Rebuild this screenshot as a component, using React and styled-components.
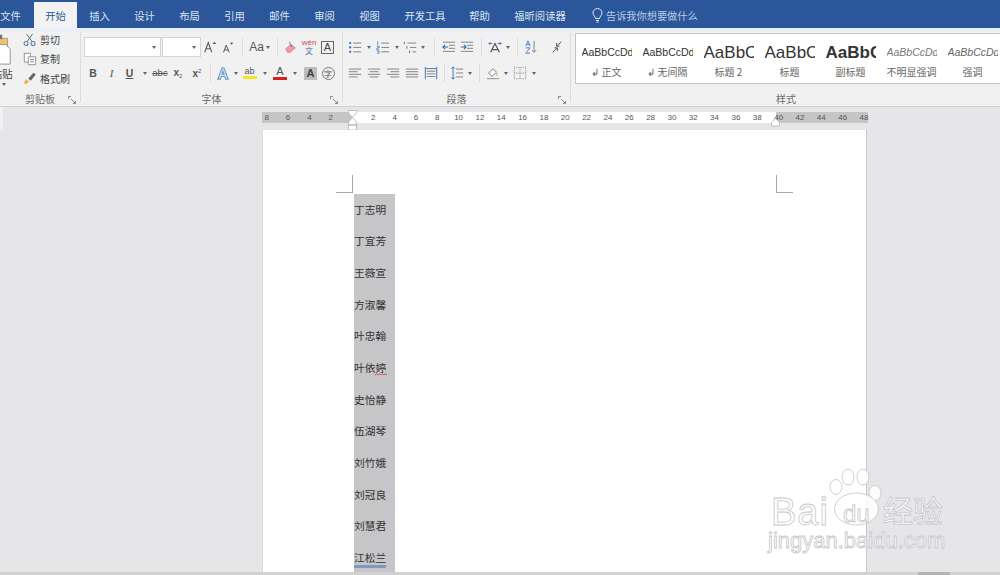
import React from "react";
import styled, { createGlobalStyle } from "styled-components";

const CJK = `"Noto Sans CJK SC", "Noto Sans", sans-serif`;

const Global = createGlobalStyle`
  html, body { margin: 0; padding: 0; background: #e6e6e8; overflow: hidden; }
  body { font-family: ${CJK}; }
`;

const Window = styled.div`
  position: relative;
  width: 1000px;
  height: 575px;
  overflow: hidden;
  display: flex;
  flex-direction: column;
  background: #e6e6e8;
`;

/* ---------- tabs ---------- */
const TabBar = styled.div`
  flex: none;
  height: 28px;
  background: #2b579a;
  display: flex;
  align-items: stretch;
  margin-left: -13px;
  padding-top: 2px;
  box-sizing: border-box;
`;
const Tab = styled.div`
  flex: none;
  width: ${(p) => p.$w || 45}px;
  display: flex;
  align-items: center;
  justify-content: center;
  font-size: 10.3px;
  color: ${(p) => (p.$active ? "#2b579a" : "#dbe4f1")};
  background: ${(p) => (p.$active ? "#f2f2f3" : "transparent")};
`;
const TellMe = styled.div`
  display: flex;
  align-items: center;
  gap: 2px;
  margin-left: 12px;
  font-size: 10.2px;
  color: #b9cbe4;
`;

/* ---------- ribbon ---------- */
const Ribbon = styled.div`
  flex: none;
  height: 79px;
  box-sizing: border-box;
  background: #f1f1f2;
  border-top: 4px solid #e9eff6;
  border-bottom: 1px solid #d2d2d2;
  display: flex;
  overflow: hidden;
`;
const Group = styled.div`
  position: relative;
  flex: none;
  width: ${(p) => p.$w}px;
  box-sizing: border-box;
  height: 70px;
  border-right: ${(p) => (p.$last ? "0" : "1px solid #dcdcdc")};
  display: flex;
  flex-direction: column;
`;
const GroupBody = styled.div`
  flex: none;
  height: 56px;
  box-sizing: border-box;
  padding-top: ${(p) => p.$top ?? 4}px;
  padding-left: ${(p) => p.$left ?? 0}px;
  display: flex;
  flex-direction: ${(p) => (p.$row ? "row" : "column")};
  gap: ${(p) => p.$gap ?? 4}px;
`;
const GroupLabel = styled.div`
  flex: none;
  margin-top: 4px;
  height: 14px;
  line-height: 14px;
  text-align: center;
  font-size: 10px;
  color: #6a6a6a;
`;
const Launcher = styled.svg`
  position: absolute;
  right: 4px;
  bottom: -2px;
  width: 8px;
  height: 8px;
`;
const ToolRow = styled.div`
  display: flex;
  align-items: center;
  height: 22px;
`;
const Cell = styled.div`
  flex: none;
  width: ${(p) => p.$w}px;
  height: 20px;
  display: flex;
  align-items: center;
  justify-content: center;
`;
const Sep = styled.div`
  width: 1px;
  height: 18px;
  background: #dcdcdc;
`;
const Caret = styled.div`
  width: 0;
  height: 0;
  border-left: 2.5px solid transparent;
  border-right: 2.5px solid transparent;
  border-top: 3px solid #666;
`;
const Combo = styled.div`
  flex: none;
  width: ${(p) => p.$w}px;
  height: 20px;
  margin-right: ${(p) => p.$gap || 0}px;
  box-sizing: border-box;
  background: #fff;
  border: 1px solid #d4d4d4;
  display: flex;
  align-items: center;
  justify-content: flex-end;
  padding-right: 4px;
`;
const Glyph = styled.span`
  font-family: ${(p) => (p.$serif ? `"Liberation Serif", serif` : `"Liberation Sans", sans-serif`)};
  font-size: ${(p) => p.$size || 11}px;
  font-weight: ${(p) => (p.$bold ? 700 : 400)};
  font-style: ${(p) => (p.$italic ? "italic" : "normal")};
  text-decoration: ${(p) => p.$deco || "none"};
  color: ${(p) => p.$color || "#555"};
  line-height: 1;
  white-space: nowrap;
`;
const SupSub = styled.span`
  font-size: 6px;
  font-weight: 400;
  vertical-align: ${(p) => (p.$sup ? "4px" : "-2px")};
`;
const ColorGlyph = styled.div`
  display: flex;
  flex-direction: column;
  align-items: center;
  line-height: 1;
`;
const ColorBar = styled.div`
  width: 14px;
  height: 3px;
  background: ${(p) => p.$c};
`;
const BoxedA = styled.div`
  width: 13px;
  height: 13px;
  box-sizing: border-box;
  border: 1px solid #666;
  display: flex;
  align-items: center;
  justify-content: center;
  font-family: "Liberation Sans", sans-serif;
  font-size: 11px;
  color: #444;
`;
const ShadedA = styled(BoxedA)`
  border: 0;
  background: #bdbdbd;
  font-weight: 700;
`;
const CircleChar = styled.div`
  width: 13px;
  height: 13px;
  box-sizing: border-box;
  border: 1px solid #777;
  border-radius: 50%;
  display: flex;
  align-items: center;
  justify-content: center;
  font-size: 8px;
  color: #555;
`;
const Wen = styled.div`
  display: flex;
  flex-direction: column;
  align-items: center;
  font-size: 8px;
  line-height: 8px;
  color: #666;
`;
const WenTop = styled.span`
  color: #c0504d;
  font-family: "Liberation Sans", sans-serif;
`;
const WenBottom = styled.span`
  color: #3f6fa8;
`;

/* clipboard */
const PasteCol = styled.div`
  flex: none;
  width: 20px;
  margin-left: -6px;
  display: flex;
  flex-direction: column;
  align-items: center;
`;
const PasteText = styled.div`
  font-size: 10.6px;
  line-height: 12px;
  color: #444;
  margin: 3px 0 3px -4px;
`;
const ClipCol = styled.div`
  margin-left: 9px;
  margin-top: -3px;
  display: flex;
  flex-direction: column;
`;
const ClipItem = styled.div`
  height: 19.5px;
  display: flex;
  align-items: center;
  gap: 3px;
  font-size: 10px;
  color: #444;
`;

/* styles gallery */
const Gallery = styled.div`
  flex: none;
  margin-left: 4px;
  width: 430px;
  height: 51px;
  box-sizing: border-box;
  background: #fff;
  border: 1px solid #c6c6c6;
  border-right: 0;
  display: flex;
`;
const StyleItem = styled.div`
  flex: none;
  width: 61px;
  display: flex;
  flex-direction: column;
  align-items: center;
  overflow: hidden;
`;
const StylePreview = styled.div`
  width: 50px;
  height: 32px;
  padding-top: 4px;
  display: flex;
  align-items: center;
  box-sizing: border-box;
  overflow: hidden;
  white-space: nowrap;
  font-family: "Liberation Sans", sans-serif;
  font-size: ${(p) => p.$size}px;
  line-height: 1;
  font-weight: ${(p) => (p.$bold ? 700 : 400)};
  font-style: ${(p) => (p.$italic ? "italic" : "normal")};
  color: ${(p) => p.$color || "#333"};
`;
const StyleName = styled.div`
  font-size: 10px;
  line-height: 12px;
  color: #666;
  white-space: nowrap;
`;

/* ---------- ruler ---------- */
const Workspace = styled.div`
  position: relative;
  flex: 1;
  min-height: 0;
  display: flex;
  flex-direction: column;
  align-items: flex-start;
  padding-left: 263px;
`;
const LeftEdge = styled.div`
  position: absolute;
  left: 0;
  top: 0;
  width: 3px;
  height: 22px;
  background: #f1f1f2;
`;
const Ruler = styled.div`
  flex: none;
  margin: 5px 0 0 -1px;
  height: 11px;
  display: flex;
  position: relative;
`;
const RulerPart = styled.div`
  flex: none;
  width: ${(p) => p.$w}px;
  height: 11px;
  background: ${(p) => (p.$light ? "#fff" : "#c5c5c5")};
  display: flex;
  justify-content: ${(p) => (p.$end ? "flex-end" : "flex-start")};
  padding-left: ${(p) => p.$pl || 0}px;
  padding-right: ${(p) => p.$pr || 0}px;
  box-sizing: border-box;
`;
const Tick = styled.div`
  flex: none;
  width: 21.33px;
  margin-left: ${(p) => p.$ml || 0}px;
  text-align: center;
  font-family: "Liberation Sans", sans-serif;
  font-size: 8px;
  line-height: 11px;
  color: #555;
`;
const IndentMark = styled.svg`
  position: absolute;
  left: ${(p) => p.$x}px;
  top: ${(p) => p.$y}px;
  width: 9px;
  height: 21px;
`;

/* ---------- page ---------- */
const Page = styled.div`
  position: relative;
  flex: none;
  margin-top: 7px;
  width: 603px;
  height: 442px;
  background: #fff;
  box-sizing: border-box;
  padding: 64px 0 0 91px;
  box-shadow: 1px 0 0 #c9c9cc, -1px 0 0 #dcdcde;
`;
const CropMark = styled.div`
  position: absolute;
  top: 45px;
  width: 17px;
  height: 18px;
  box-sizing: border-box;
  border-bottom: 1px solid #a8a8a8;
  ${(p) => (p.$right ? "left: 513px; border-left: 1px solid #a8a8a8;" : "left: 73px; border-right: 1px solid #a8a8a8;")}
`;
const NameColumn = styled.div`
  width: 41px;
  background: #c6c5c7;
  display: flex;
  flex-direction: column;
`;
const NameRow = styled.div`
  flex: none;
  height: 31.67px;
  display: flex;
  align-items: center;
`;
const Name = styled.span`
  position: relative;
  font-size: 10.7px;
  line-height: 14px;
  color: #333;
  white-space: nowrap;
`;
const BlueRule = styled.span`
  position: absolute;
  left: 0;
  right: 0;
  bottom: -3px;
  height: 3px;
  background: #7f97c4;
`;
const Squiggle = styled.svg`
  position: absolute;
  left: 21px;
  bottom: -1px;
  width: 12px;
  height: 3px;
`;

/* ---------- status + watermark ---------- */
const StatusBar = styled.div`
  position: absolute;
  left: 0;
  right: 0;
  bottom: 0;
  height: 3px;
  background: #d2d2d2;
`;
const StatusThumb = styled.div`
  position: absolute;
  left: 918px;
  top: 0;
  width: 32px;
  height: 3px;
  background: #b4b4b4;
`;
const Watermark = styled.div`
  position: absolute;
  left: 766px;
  top: 466px;
  width: 190px;
  height: 92px;
  pointer-events: none;
`;
const Outlined = styled.div`
  position: absolute;
  left: ${(p) => p.$x}px;
  top: ${(p) => p.$y}px;
  font-family: ${(p) => (p.$cjk ? CJK : `"Liberation Sans", sans-serif`)};
  font-size: ${(p) => p.$size}px;
  line-height: 1;
  letter-spacing: ${(p) => p.$ls || 0}px;
  white-space: nowrap;
  color: rgba(255, 255, 255, 0.92);
  -webkit-text-stroke: 0.8px #c6c6ca;
`;
const Paw = styled.svg`
  position: absolute;
  left: 62px;
  top: 0;
  width: 62px;
  height: 62px;
`;

/* ---------- icons ---------- */
const S = { fill: "none", stroke: "#777", strokeWidth: 1 };
const lines = (rows) => rows.map(([a, b, y]) => `M${a} ${y}H${b}`).join("");
const ICONS = {
  bullets: (
    <>
      <path {...S} d={lines([[6, 15, 3.5], [6, 15, 8.5], [6, 15, 13.5]])} />
      <circle cx="2.5" cy="3.5" r="1.3" fill="#2b6cb0" />
      <circle cx="2.5" cy="8.5" r="1.3" fill="#2b6cb0" />
      <circle cx="2.5" cy="13.5" r="1.3" fill="#2b6cb0" />
    </>
  ),
  numbers: (
    <>
      <path {...S} d={lines([[6, 15, 3.5], [6, 15, 8.5], [6, 15, 13.5]])} />
      <path stroke="#2b6cb0" fill="none" d="M2 1.5V5.5M1 7H3.5V9H1V11H3.5M1 12.5H3.5V15H1" strokeWidth=".8" />
    </>
  ),
  multi: (
    <>
      <path {...S} d={lines([[5, 15, 3.5], [8, 15, 8.5], [11, 15, 13.5]])} />
      <path stroke="#2b6cb0" fill="none" d="M1.5 2V5M4.5 7V10M7.5 12V15" strokeWidth="1" />
    </>
  ),
  outdent: (
    <>
      <path {...S} d={lines([[1, 15, 2.5], [8, 15, 6], [8, 15, 9.5], [1, 15, 13]])} />
      <path fill="none" stroke="#2b6cb0" strokeWidth="1.2" d="M7 8H1M3.5 5.5L1 8l2.5 2.5" />
    </>
  ),
  indent: (
    <>
      <path {...S} d={lines([[1, 15, 2.5], [8, 15, 6], [8, 15, 9.5], [1, 15, 13]])} />
      <path fill="none" stroke="#2b6cb0" strokeWidth="1.2" d="M1 8H7M4.5 5.5L7 8l-2.5 2.5" />
    </>
  ),
  chinese: (
    <>
      <path fill="none" stroke="#555" strokeWidth="1.4" d="M3 14L8 4l5 10M5 11H11" />
      <path fill="none" stroke="#2b6cb0" strokeWidth="1" d="M1 4h4M2.5 2.5L1 4l1.5 1.5M11 4h4M13.5 2.5L15 4l-1.5 1.5" />
    </>
  ),
  sort: (
    <>
      <path fill="none" stroke="#2b6cb0" strokeWidth=".9" d="M2 7L4.5 1 7 7M3 5H6M2 9H7L2 15H7" />
      <path {...S} d="M11.5 1V14M9 11.5l2.5 2.5 2.5-2.5" />
    </>
  ),
  marks: (
    <path fill="none" stroke="#555" strokeWidth="1.1" d="M13 2L7.500 7M7.500 3.500V7H11M3 14L8.500 9M8.500 12.500V9H5" />
  ),
  left: <path {...S} d={lines([[1, 15, 3.5], [1, 11, 6.5], [1, 15, 9.5], [1, 11, 12.5]])} />,
  center: <path {...S} d={lines([[1, 15, 3.5], [3, 13, 6.5], [1, 15, 9.5], [3, 13, 12.5]])} />,
  right: <path {...S} d={lines([[1, 15, 3.5], [5, 15, 6.5], [1, 15, 9.5], [5, 15, 12.5]])} />,
  justify: <path {...S} d={lines([[1, 15, 3.5], [1, 15, 6.5], [1, 15, 9.5], [1, 15, 12.5]])} />,
  distribute: (
    <>
      <path {...S} d={lines([[3, 13, 6], [3, 13, 9], [3, 13, 12]])} />
      <path fill="none" stroke="#2b6cb0" d="M1.5 1V15M14.5 1V15M2 3H14" />
    </>
  ),
  spacing: (
    <>
      <path {...S} d={lines([[7, 15, 3.5], [7, 15, 8], [7, 15, 12.5]])} />
      <path fill="none" stroke="#2b6cb0" d="M3.5 1V15M1.5 3L3.5 1l2 2M1.5 13l2 2 2-2" />
    </>
  ),
  fill: (
    <>
      <path fill="#f5f5f5" stroke="#777" d="M3 8L8 3l4 4-5 5z" />
      <path fill="#e9b872" stroke="none" d="M12 7l1.6 3a1.2 1.2 0 1 1-2.4 0z" />
      <path fill="none" stroke="#888" d="M1 14.5H15" />
    </>
  ),
  borders: (
    <path fill="none" stroke="#888" strokeDasharray="1 1" d="M1.5 1.5H14.5V14.5H1.5ZM8 1.5V14.5M1.5 8H14.5" />
  ),
  growA: (
    <>
      <path fill="none" stroke="#555" strokeWidth="1.2" d="M2 14L6 3l4 11M3.5 10H8.5" />
      <path fill="#555" d="M11 4.5L13 2l2 2.5z" />
    </>
  ),
  shrinkA: (
    <>
      <path fill="none" stroke="#555" strokeWidth="1.2" d="M3 14L6.5 5 10 14M4.500 11H8.500" />
      <path fill="#555" d="M11 2L13 4.500 15 2z" />
    </>
  ),
  eraser: (
    <>
      <path fill="#ef9aa6" stroke="#d77b88" d="M2 10L8 5l5 4-6 5H4z" />
      <path fill="none" stroke="#5b7aa5" d="M6 2L9 8" />
    </>
  ),
  effects: (
    <path fill="#cfe0f3" stroke="#6b97cc" strokeWidth="1.2" d="M2 15L7 2h2l5 13h-3l-1-3H6l-1 3zM6.800 9.500h2.400L8 6z" />
  ),
  scissors: (
    <>
      <circle cx="3.5" cy="12" r="2.3" fill="none" stroke="#5f7ea6" strokeWidth="1.2" />
      <circle cx="11.5" cy="12" r="2.3" fill="none" stroke="#5f7ea6" strokeWidth="1.2" />
      <path fill="none" stroke="#666" strokeWidth="1.1" d="M4.500 10L11 1M10.500 10L4 1" />
    </>
  ),
  copy: (
    <>
      <path fill="#fff" stroke="#888" d="M1.500 1.500H8.500V11.500H1.500Z" />
      <path fill="#fff" stroke="#888" d="M6 5.500H14.500V14.500H6Z" />
      <path stroke="#5f7ea6" d="M8 8.500H12.500M8 11H12.500" />
    </>
  ),
  brush: (
    <>
      <path fill="#e8b45f" d="M1 14l2-5 4 3-3 3z" />
      <path fill="#666" d="M6 8.500l6-6.500 2.500 2-5.500 7z" />
    </>
  ),
  paste: (
    <>
      <path fill="#eac27c" stroke="#b99656" d="M-8 6H14V34H-8Z" />
      <path fill="#fff" stroke="#8f8f8f" d="M2 13H12L17 18V35H2Z" />
      <path fill="#777" d="M-3 2H8V7H-3Z" />
    </>
  ),
};
const Icon = ({ name, size = 14 }) => (
  <svg width={size} height={size} viewBox="0 0 16 16" aria-hidden="true">
    {ICONS[name]}
  </svg>
);

const Tool = ({ w, children }) => <Cell $w={w}>{children}</Cell>;
const Drop = ({ w = 10 }) => (
  <Cell $w={w}>
    <Caret />
  </Cell>
);
const Divider = ({ w }) => (
  <Cell $w={w}>
    <Sep />
  </Cell>
);
const IconTool = ({ w, name, size }) => (
  <Tool w={w}>
    <Icon name={name} size={size} />
  </Tool>
);
const DialogMark = () => (
  <Launcher viewBox="0 0 8 8" aria-hidden="true">
    <path d="M.5 3V.5H3M7.500 5V7.500H5M3 3l4 4" fill="none" stroke="#888" />
  </Launcher>
);

const TABS = [
  ["文件", 47],
  ["开始", 43],
  ["插入", 45],
  ["设计", 45],
  ["布局", 45],
  ["引用", 45],
  ["邮件", 45],
  ["审阅", 45],
  ["视图", 45],
  ["开发工具", 66],
  ["帮助", 43],
  ["福昕阅读器", 78],
];
const STYLES = [
  ["AaBbCcDd", "↲ 正文", 10.5],
  ["AaBbCcDd", "↲ 无间隔", 10.5],
  ["AaBbC", "标题 2", 17],
  ["AaBbC", "标题", 17],
  ["AaBbC", "副标题", 17, { bold: true }],
  ["AaBbCcDd", "不明显强调", 10.5, { italic: true, color: "#777" }],
  ["AaBbCcDd", "强调", 10.5, { italic: true, color: "#666" }],
];
const NAMES = ["丁志明", "丁宜芳", "王薇宣", "方淑馨", "叶忠翰", "叶依婷", "史怡静", "伍湖琴", "刘竹娥", "刘冠良", "刘慧君", "江松兰"];
const LEFT_TICKS = [8, 6, 4, 2];
const MID_TICKS = Array.from({ length: 19 }, (_, i) => (i + 1) * 2);
const RIGHT_TICKS = [40, 42, 44, 46, 48];

export default function App() {
  return (
    <Window>
      <Global />
      <TabBar>
        {TABS.map(([t, w]) => (
          <Tab key={t} $w={w} $active={t === "开始"}>
            {t}
          </Tab>
        ))}
        <TellMe>
          <svg width="13" height="15" viewBox="0 0 13 15" aria-hidden="true">
            <path fill="none" stroke="#dfe8f4" d="M4.500 10.500C4.500 8.500 2 7.500 2 5a4.500 4.500 0 0 1 9 0c0 2.500-2.500 3.500-2.500 5.500zM5 12.500H8M5.500 14H7.500" />
          </svg>
          告诉我你想要做什么
        </TellMe>
      </TabBar>

      <Ribbon>
        <Group $w={81}>
          <GroupBody $row $top={1} $gap={0}>
            <PasteCol>
              <svg width="20" height="32" viewBox="0 0 20 36" aria-hidden="true">
                {ICONS.paste}
              </svg>
              <PasteText>粘贴</PasteText>
              <Caret />
            </PasteCol>
            <ClipCol>
              <ClipItem>
                <Icon name="scissors" />剪切
              </ClipItem>
              <ClipItem>
                <Icon name="copy" />复制
              </ClipItem>
              <ClipItem>
                <Icon name="brush" />格式刷
              </ClipItem>
            </ClipCol>
          </GroupBody>
          <GroupLabel>剪贴板</GroupLabel>
          <DialogMark />
        </Group>

        <Group $w={262}>
          <GroupBody $left={3}>
            <ToolRow>
              <Combo $w={77} $gap={1}>
                <Caret />
              </Combo>
              <Combo $w={39}>
                <Caret />
              </Combo>
              <IconTool w={18} name="growA" />
              <IconTool w={16} name="shrinkA" size={13} />
              <Divider w={14} />
              <Tool w={15}>
                <Glyph $size={12}>Aa</Glyph>
              </Tool>
              <Drop w={7} />
              <Divider w={12} />
              <IconTool w={16} name="eraser" />
              <Tool w={20}>
                <Wen>
                  <WenTop>wén</WenTop>
                  <WenBottom>文</WenBottom>
                </Wen>
              </Tool>
              <Tool w={17}>
                <BoxedA>A</BoxedA>
              </Tool>
            </ToolRow>
            <ToolRow>
              <Tool w={18}>
                <Glyph $bold $size={10.5}>B</Glyph>
              </Tool>
              <Tool w={19}>
                <Glyph $italic $serif $size={11}>I</Glyph>
              </Tool>
              <Tool w={17}>
                <Glyph $bold $size={10.5} $deco="underline">U</Glyph>
              </Tool>
              <Drop w={14} />
              <Tool w={16}>
                <Glyph $size={9.5} $deco="line-through">abc</Glyph>
              </Tool>
              <Tool w={20}>
                <Glyph $bold $size={10}>x<SupSub>2</SupSub></Glyph>
              </Tool>
              <Tool w={18}>
                <Glyph $bold $size={10}>x<SupSub $sup>2</SupSub></Glyph>
              </Tool>
              <Divider w={8} />
              <IconTool w={17} name="effects" />
              <Drop />
              <Tool w={17}>
                <ColorGlyph>
                  <Glyph $size={9}>ab</Glyph>
                  <ColorBar $c="#f6e51f" />
                </ColorGlyph>
              </Tool>
              <Drop w={14} />
              <Tool w={16}>
                <ColorGlyph>
                  <Glyph $size={11}>A</Glyph>
                  <ColorBar $c="#d81e1e" />
                </ColorGlyph>
              </Tool>
              <Drop w={14} />
              <Tool w={17}>
                <ShadedA>A</ShadedA>
              </Tool>
              <Tool w={18}>
                <CircleChar>字</CircleChar>
              </Tool>
            </ToolRow>
          </GroupBody>
          <GroupLabel>字体</GroupLabel>
          <DialogMark />
        </Group>

        <Group $w={228}>
          <GroupBody $left={3}>
            <ToolRow>
              <IconTool w={17} name="bullets" />
              <Drop w={11} />
              <IconTool w={18} name="numbers" />
              <Drop />
              <IconTool w={16} name="multi" />
              <Drop w={10} />
              <Divider w={12} />
              <IconTool w={18} name="outdent" />
              <IconTool w={18} name="indent" />
              <Divider w={10} />
              <IconTool w={18} name="chinese" />
              <Drop w={8} />
              <Divider w={10} />
              <IconTool w={18} name="sort" />
              <Cell $w={8} />
              <IconTool w={18} name="marks" />
            </ToolRow>
            <ToolRow>
              <IconTool w={18} name="left" />
              <IconTool w={19} name="center" />
              <IconTool w={19} name="right" />
              <IconTool w={19} name="justify" />
              <IconTool w={19} name="distribute" />
              <Divider w={8} />
              <IconTool w={18} name="spacing" />
              <Drop w={8} />
              <Divider w={10} />
              <IconTool w={17} name="fill" />
              <Drop w={10} />
              <IconTool w={18} name="borders" />
              <Drop w={10} />
            </ToolRow>
          </GroupBody>
          <GroupLabel>段落</GroupLabel>
          <DialogMark />
        </Group>

        <Group $w={430} $last>
          <GroupBody $top={1} $left={0}>
            <Gallery>
              {STYLES.map(([sample, name, size, opt = {}], i) => (
                <StyleItem key={i}>
                  <StylePreview $size={size} $bold={opt.bold} $italic={opt.italic} $color={opt.color}>
                    {sample}
                  </StylePreview>
                  <StyleName>{name}</StyleName>
                </StyleItem>
              ))}
            </Gallery>
          </GroupBody>
          <GroupLabel>样式</GroupLabel>
        </Group>
      </Ribbon>

      <Workspace>
        <LeftEdge />
        <Ruler>
          <RulerPart $w={90} $end $pr={10.67}>
            {LEFT_TICKS.map((n) => (
              <Tick key={n}>{n}</Tick>
            ))}
          </RulerPart>
          <RulerPart $w={424} $light $pl={10.67}>
            {MID_TICKS.map((n) => (
              <Tick key={n}>{n}</Tick>
            ))}
          </RulerPart>
          <RulerPart $w={92}>
            {RIGHT_TICKS.map((n, i) => (
              <Tick key={n} $ml={i === 0 ? -8 : 0}>
                {n}
              </Tick>
            ))}
          </RulerPart>
          <IndentMark $x={86} $y={-2} viewBox="0 0 9 21" aria-hidden="true">
            <path fill="#fff" stroke="#aaa" strokeWidth=".7" d="M.5.5H8.500V3L4.500 7.500.5 3zM4.500 7.500L8.500 12V15H.5V12zM.5 15H8.500V20H.5z" />
          </IndentMark>
          <IndentMark $x={509} $y={0} viewBox="0 0 9 21" aria-hidden="true">
            <path fill="#fff" stroke="#aaa" strokeWidth=".7" d="M4.500 6.500L8.500 10.500V14H.5V10.500z" />
          </IndentMark>
        </Ruler>
        <Page>
          <CropMark />
          <CropMark $right />
          <NameColumn>
            {NAMES.map((n, i) => (
              <NameRow key={n}>
                <Name>
                  {n}
                  {i === 5 && (
                    <Squiggle viewBox="0 0 12 3" aria-hidden="true">
                      <path fill="none" stroke="#d33" strokeWidth=".8" d="M0 2L1.500 .7 3 2 4.500 .7 6 2 7.500 .7 9 2 10.500 .7 12 2" />
                    </Squiggle>
                  )}
                  {i === 11 && <BlueRule />}
                </Name>
              </NameRow>
            ))}
          </NameColumn>
        </Page>
        <StatusBar>
          <StatusThumb />
        </StatusBar>
      </Workspace>

      <Watermark>
        <Paw viewBox="0 0 62 62" aria-hidden="true">
          <g fill="rgba(255,255,255,.85)" stroke="#c9c9cd" strokeWidth=".9">
            <ellipse cx="8" cy="21" rx="6" ry="7.500" />
            <ellipse cx="20" cy="11" rx="6" ry="8" />
            <ellipse cx="35" cy="11" rx="6" ry="8" />
            <ellipse cx="47" cy="27" rx="6" ry="7.500" />
            <ellipse cx="28.500" cy="43" rx="22" ry="16" />
          </g>
        </Paw>
        <Outlined $x={5} $y={27} $size={38} $ls={1}>Bai</Outlined>
        <Outlined $x={77} $y={36} $size={24}>du</Outlined>
        <Outlined $cjk $x={117} $y={28} $size={30}>经验</Outlined>
        <Outlined $x={2} $y={64} $size={22}>jingyan.baidu.com</Outlined>
      </Watermark>
    </Window>
  );
}
